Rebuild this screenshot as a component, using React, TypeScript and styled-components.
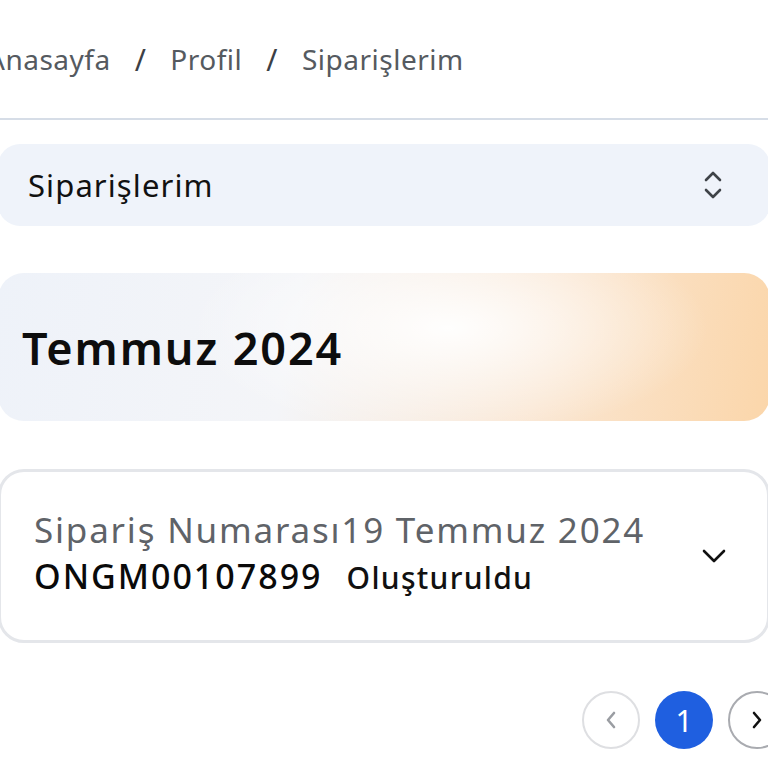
import React from 'react';
import styled, { createGlobalStyle } from 'styled-components';

const GlobalStyle = createGlobalStyle`
  html, body {
    margin: 0;
    padding: 0;
    background: #ffffff;
    overflow: hidden;
  }
  body {
    font-family: 'Noto Sans', 'Open Sans', sans-serif;
    color: #111111;
  }
`;

const Page = styled.div`
  width: 772px;
  margin-left: -2px;
  display: flex;
  flex-direction: column;
`;

const Breadcrumb = styled.nav`
  height: 118px;
  display: flex;
  align-items: center;
  gap: 24px;
  margin-left: -11px;
  font-size: 28px;
  letter-spacing: 0.5px;
  color: #555a60;
`;

const Crumb = styled.span``;

const Slash = styled.span`
  color: #3c4045;
  font-size: 30px;
`;

const Divider = styled.div`
  height: 2px;
  background: #d6dde7;
`;

const SelectBox = styled.div`
  margin-top: 24px;
  height: 82px;
  border-radius: 22px;
  background: #eff3fa;
  display: flex;
  align-items: center;
  justify-content: space-between;
  padding: 0 46px 0 30px;
  font-size: 31px;
  letter-spacing: 1.1px;
  color: #111111;
`;

const MonthCard = styled.div`
  margin-top: 47px;
  height: 148px;
  border-radius: 26px;
  display: flex;
  align-items: center;
  padding-left: 24px;
  background:
    radial-gradient(ellipse 260px 110px at 450px 55px, rgba(255, 255, 255, 0.95), rgba(255, 255, 255, 0) 100%),
    linear-gradient(100deg, #eef2f9 0%, #f4f5f8 38%, #fae6d2 70%, #fbd6aa 100%);
`;

const MonthTitle = styled.h2`
  margin: 0;
  font-size: 45px;
  font-weight: 600;
  color: #0d0d0d;
  letter-spacing: 1.9px;
`;

const OrderCard = styled.div`
  margin-top: 48px;
  height: 174px;
  box-sizing: border-box;
  border: 3px solid #e4e6ea;
  border-radius: 26px;
  display: flex;
  align-items: center;
  justify-content: space-between;
  padding: 0 40px 0 33px;
`;

const OrderInfo = styled.div`
  display: flex;
  flex-direction: column;
  margin-top: -8px;
`;

const MetaRow = styled.div`
  font-size: 35px;
  letter-spacing: 1.8px;
  color: #5f6368;
  line-height: 50px;
`;

const MainRow = styled.div`
  display: flex;
  align-items: baseline;
  gap: 24px;
  line-height: 42px;
`;

const OrderNo = styled.span`
  font-size: 34px;
  font-weight: 500;
  letter-spacing: 2px;
  color: #0a0a0a;
`;

const Status = styled.span`
  font-size: 30px;
  font-weight: 500;
  letter-spacing: 1.3px;
  color: #111111;
`;

const Pager = styled.div`
  margin-top: 48px;
  display: flex;
  justify-content: flex-end;
  gap: 15px;
  margin-right: -16px;
`;

const PageButton = styled.div<{ $active?: boolean; $dim?: boolean }>`
  width: 58px;
  height: 58px;
  box-sizing: border-box;
  border-radius: 50%;
  display: flex;
  align-items: center;
  justify-content: center;
  font-size: 30px;
  background: ${(p) => (p.$active ? '#1f5fe0' : '#ffffff')};
  color: ${(p) => (p.$active ? '#ffffff' : p.$dim ? '#9a9da2' : '#111111')};
  border: ${(p) => (p.$active ? 'none' : p.$dim ? '2px solid #dedfe2' : '2px solid #a9abb0')};
`;

const UpDownIcon = () => (
  <svg width="22" height="34" viewBox="0 0 22 34" fill="none" stroke="#3f4348" strokeWidth="2.6" strokeLinecap="round" strokeLinejoin="round">
    <path d="M4 12 L11 5 L18 12" />
    <path d="M4 22 L11 29 L18 22" />
  </svg>
);

const ChevronDown = () => (
  <svg width="26" height="16" viewBox="0 0 26 16" fill="none" stroke="#111111" strokeWidth="2.6" strokeLinecap="round" strokeLinejoin="round">
    <path d="M3 3 L13 13 L23 3" />
  </svg>
);

const Chevron = ({ dir, color }: { dir: 'left' | 'right'; color: string }) => (
  <svg width="14" height="22" viewBox="0 0 14 22" fill="none" stroke={color} strokeWidth="2.6" strokeLinecap="round" strokeLinejoin="round">
    <path d={dir === 'left' ? 'M10 4 L4 11 L10 18' : 'M4 4 L10 11 L4 18'} />
  </svg>
);

export default function App() {
  return (
    <>
      <GlobalStyle />
      <Page>
        <Breadcrumb>
          <Crumb>Anasayfa</Crumb>
          <Slash>/</Slash>
          <Crumb>Profil</Crumb>
          <Slash>/</Slash>
          <Crumb>Siparişlerim</Crumb>
        </Breadcrumb>
        <Divider />
        <SelectBox>
          <span>Siparişlerim</span>
          <UpDownIcon />
        </SelectBox>
        <MonthCard>
          <MonthTitle>Temmuz 2024</MonthTitle>
        </MonthCard>
        <OrderCard>
          <OrderInfo>
            <MetaRow>Sipariş Numarası19 Temmuz 2024</MetaRow>
            <MainRow>
              <OrderNo>ONGM00107899</OrderNo>
              <Status>Oluşturuldu</Status>
            </MainRow>
          </OrderInfo>
          <ChevronDown />
        </OrderCard>
        <Pager>
          <PageButton $dim>
            <Chevron dir="left" color="#9a9da2" />
          </PageButton>
          <PageButton $active>1</PageButton>
          <PageButton>
            <Chevron dir="right" color="#111111" />
          </PageButton>
        </Pager>
      </Page>
    </>
  );
}
